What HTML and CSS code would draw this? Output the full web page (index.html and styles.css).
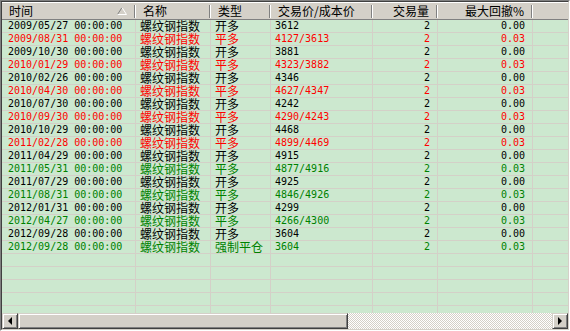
FILE: index.html
```html
<!DOCTYPE html>
<html>
<head>
<meta charset="utf-8">
<link rel="stylesheet" href="styles.css">
</head>
<body>
<div class="frame">
  <div class="lv">
    <div class="hdr">
      <div class="hc c1">时间<svg class="sort" width="10" height="8" viewBox="0 0 10 8"><path d="M0.5 7.5 L5 0.5" stroke="#808080" fill="none"/><path d="M5 0.5 L9.5 7.5 L0.5 7.5" stroke="#ffffff" fill="none"/></svg></div>
      <div class="hc c2">名称</div>
      <div class="hc c3">类型</div>
      <div class="hc c4">交易价/成本价</div>
      <div class="hc c5 r">交易量</div>
      <div class="hc c6 r">最大回撤%</div>
      <div class="hc c7"></div>
    </div>
    <div class="body">
      <div class="row"><div class="c c1 num">2009/05/27 00:00:00</div><div class="c c2">螺纹钢指数</div><div class="c c3">开多</div><div class="c c4 num">3612</div><div class="c c5 num r">2</div><div class="c c6 num r">0.00</div><div class="c c7"></div></div>
      <div class="row red"><div class="c c1 num">2009/08/31 00:00:00</div><div class="c c2">螺纹钢指数</div><div class="c c3">平多</div><div class="c c4 num">4127/3613</div><div class="c c5 num r">2</div><div class="c c6 num r">0.03</div><div class="c c7"></div></div>
      <div class="row"><div class="c c1 num">2009/10/30 00:00:00</div><div class="c c2">螺纹钢指数</div><div class="c c3">开多</div><div class="c c4 num">3881</div><div class="c c5 num r">2</div><div class="c c6 num r">0.00</div><div class="c c7"></div></div>
      <div class="row red"><div class="c c1 num">2010/01/29 00:00:00</div><div class="c c2">螺纹钢指数</div><div class="c c3">平多</div><div class="c c4 num">4323/3882</div><div class="c c5 num r">2</div><div class="c c6 num r">0.03</div><div class="c c7"></div></div>
      <div class="row"><div class="c c1 num">2010/02/26 00:00:00</div><div class="c c2">螺纹钢指数</div><div class="c c3">开多</div><div class="c c4 num">4346</div><div class="c c5 num r">2</div><div class="c c6 num r">0.00</div><div class="c c7"></div></div>
      <div class="row red"><div class="c c1 num">2010/04/30 00:00:00</div><div class="c c2">螺纹钢指数</div><div class="c c3">平多</div><div class="c c4 num">4627/4347</div><div class="c c5 num r">2</div><div class="c c6 num r">0.03</div><div class="c c7"></div></div>
      <div class="row"><div class="c c1 num">2010/07/30 00:00:00</div><div class="c c2">螺纹钢指数</div><div class="c c3">开多</div><div class="c c4 num">4242</div><div class="c c5 num r">2</div><div class="c c6 num r">0.00</div><div class="c c7"></div></div>
      <div class="row red"><div class="c c1 num">2010/09/30 00:00:00</div><div class="c c2">螺纹钢指数</div><div class="c c3">平多</div><div class="c c4 num">4290/4243</div><div class="c c5 num r">2</div><div class="c c6 num r">0.03</div><div class="c c7"></div></div>
      <div class="row"><div class="c c1 num">2010/10/29 00:00:00</div><div class="c c2">螺纹钢指数</div><div class="c c3">开多</div><div class="c c4 num">4468</div><div class="c c5 num r">2</div><div class="c c6 num r">0.00</div><div class="c c7"></div></div>
      <div class="row red"><div class="c c1 num">2011/02/28 00:00:00</div><div class="c c2">螺纹钢指数</div><div class="c c3">平多</div><div class="c c4 num">4899/4469</div><div class="c c5 num r">2</div><div class="c c6 num r">0.03</div><div class="c c7"></div></div>
      <div class="row"><div class="c c1 num">2011/04/29 00:00:00</div><div class="c c2">螺纹钢指数</div><div class="c c3">开多</div><div class="c c4 num">4915</div><div class="c c5 num r">2</div><div class="c c6 num r">0.00</div><div class="c c7"></div></div>
      <div class="row green"><div class="c c1 num">2011/05/31 00:00:00</div><div class="c c2">螺纹钢指数</div><div class="c c3">平多</div><div class="c c4 num">4877/4916</div><div class="c c5 num r">2</div><div class="c c6 num r">0.03</div><div class="c c7"></div></div>
      <div class="row"><div class="c c1 num">2011/07/29 00:00:00</div><div class="c c2">螺纹钢指数</div><div class="c c3">开多</div><div class="c c4 num">4925</div><div class="c c5 num r">2</div><div class="c c6 num r">0.00</div><div class="c c7"></div></div>
      <div class="row green"><div class="c c1 num">2011/08/31 00:00:00</div><div class="c c2">螺纹钢指数</div><div class="c c3">平多</div><div class="c c4 num">4846/4926</div><div class="c c5 num r">2</div><div class="c c6 num r">0.03</div><div class="c c7"></div></div>
      <div class="row"><div class="c c1 num">2012/01/31 00:00:00</div><div class="c c2">螺纹钢指数</div><div class="c c3">开多</div><div class="c c4 num">4299</div><div class="c c5 num r">2</div><div class="c c6 num r">0.00</div><div class="c c7"></div></div>
      <div class="row green"><div class="c c1 num">2012/04/27 00:00:00</div><div class="c c2">螺纹钢指数</div><div class="c c3">平多</div><div class="c c4 num">4266/4300</div><div class="c c5 num r">2</div><div class="c c6 num r">0.03</div><div class="c c7"></div></div>
      <div class="row"><div class="c c1 num">2012/09/28 00:00:00</div><div class="c c2">螺纹钢指数</div><div class="c c3">开多</div><div class="c c4 num">3604</div><div class="c c5 num r">2</div><div class="c c6 num r">0.00</div><div class="c c7"></div></div>
      <div class="row green"><div class="c c1 num">2012/09/28 00:00:00</div><div class="c c2">螺纹钢指数</div><div class="c c3">强制平仓</div><div class="c c4 num">3604</div><div class="c c5 num r">2</div><div class="c c6 num r">0.03</div><div class="c c7"></div></div>
      <div class="row"><div class="c c1"></div><div class="c c2"></div><div class="c c3"></div><div class="c c4"></div><div class="c c5"></div><div class="c c6"></div><div class="c c7"></div></div>
      <div class="row"><div class="c c1"></div><div class="c c2"></div><div class="c c3"></div><div class="c c4"></div><div class="c c5"></div><div class="c c6"></div><div class="c c7"></div></div>
      <div class="row"><div class="c c1"></div><div class="c c2"></div><div class="c c3"></div><div class="c c4"></div><div class="c c5"></div><div class="c c6"></div><div class="c c7"></div></div>
      <div class="row"><div class="c c1"></div><div class="c c2"></div><div class="c c3"></div><div class="c c4"></div><div class="c c5"></div><div class="c c6"></div><div class="c c7"></div></div>
      <div class="row"><div class="c c1"></div><div class="c c2"></div><div class="c c3"></div><div class="c c4"></div><div class="c c5"></div><div class="c c6"></div><div class="c c7"></div></div>
    </div>
    <div class="hscroll">
      <div class="sbtn"><span class="arr-l"></span></div>
      <div class="thumb"></div>
      <div class="track"></div>
      <div class="sbtn"><span class="arr-r"></span></div>
    </div>
  </div>
</div>
</body>
</html>
```

FILE: styles.css
```css
* { box-sizing: border-box; }
html, body { margin: 0; padding: 0; }
body {
  width: 570px;
  height: 331px;
  background: #d4d0c8;
  font-family: "Noto Sans CJK SC", sans-serif;
  font-size: 12px;
  color: #000;
  overflow: hidden;
}
.frame {
  width: 570px;
  height: 331px;
  border: 1px solid;
  border-color: #808080 #ffffff #ffffff #808080;
}
.lv {
  width: 100%;
  height: 100%;
  border: 1px solid;
  border-color: #404040 #d4d0c8 #d4d0c8 #404040;
  display: flex;
  flex-direction: column;
  background: #cce8cf;
  overflow: hidden;
}
.hdr {
  display: flex;
  height: 18px;
  flex: none;
  background: #d4d0c8;
  border-top: 1px solid #ffffff;
  border-bottom: 1px solid #808080;
}
.hc {
  position: relative;
  display: flex;
  align-items: center;
  height: 16px;
  line-height: 16px;
  padding-left: 7px;
  white-space: nowrap;
  flex: none;
}
.hc::after {
  content: "";
  position: absolute;
  right: 0;
  top: 2px;
  bottom: 1px;
  width: 2px;
  background: linear-gradient(to right, #808080 50%, #ffffff 50%);
}
.hc.r { justify-content: flex-end; padding-right: 9px; padding-left: 0; }
.hc.c7::after { display: none; }
.sort { position: absolute; left: 115px; top: 4px; }

.c1 { width: 134px; }
.c2 { width: 75px; }
.c3 { width: 60px; }
.c4 { width: 102px; }
.c5 { width: 65px; }
.c6 { width: 95px; }
.c7 { flex: 1; }

.body {
  flex: 1;
  min-height: 0;
}
.row {
  display: flex;
  height: 13px;
  border-bottom: 1px solid #d4d0c8;
}
.c {
  flex: none;
  height: 12px;
  line-height: 12px;
  border-right: 1px solid #d4d0c8;
  padding-left: 4px;
  white-space: nowrap;
}
.c.c7 { flex: 1; border-right: none; }
.c.c1 { padding-left: 6px; }
.c.r { text-align: right; padding-right: 7px; padding-left: 0; }
.num {
  font-family: "DejaVu Sans Mono", monospace;
  font-size: 10px;
}
.red { color: #ff0000; }
.green { color: #008000; }

.hscroll {
  flex: none;
  height: 16px;
  display: flex;
}
.sbtn {
  width: 16px;
  height: 16px;
  flex: none;
  background: #d4d0c8;
  border: 1px solid;
  border-color: #d4d0c8 #404040 #404040 #d4d0c8;
  box-shadow: inset 1px 1px 0 #ffffff, inset -1px -1px 0 #808080;
  display: flex;
  align-items: center;
  justify-content: center;
}
.arr-l {
  width: 0; height: 0;
  border-top: 4px solid transparent;
  border-bottom: 4px solid transparent;
  border-right: 4px solid #000;
}
.arr-r {
  width: 0; height: 0;
  border-top: 4px solid transparent;
  border-bottom: 4px solid transparent;
  border-left: 4px solid #000;
}
.thumb {
  width: 330px;
  flex: none;
  background: #d4d0c8;
  border: 1px solid;
  border-color: #d4d0c8 #404040 #404040 #d4d0c8;
  box-shadow: inset 1px 1px 0 #ffffff, inset -1px -1px 0 #808080;
}
.track {
  flex: 1;
  background-color: #ffffff;
  background-image: conic-gradient(#d4d0c8 25%, #ffffff 25% 50%, #d4d0c8 50% 75%, #ffffff 75%);
  background-size: 2px 2px;
}
```
